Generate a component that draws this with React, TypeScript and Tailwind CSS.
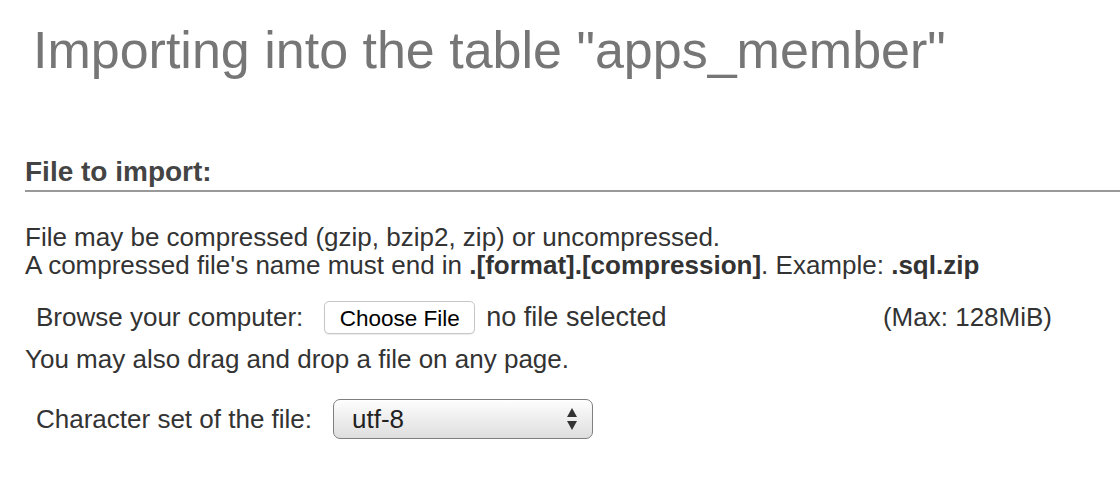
import React from 'react';

export default function App() {
  return (
    <div className="w-[1120px] h-[492px] overflow-hidden bg-white text-[#333] font-['Liberation_Sans',Arial,sans-serif]">
      <h2 className="pl-[33px] pt-[20px] text-[52px] leading-[60px] text-[#767676] whitespace-nowrap">
        Importing into the table "apps_member"
      </h2>

      <div className="ml-[25px] mt-[76px]">
        <h3 className="text-[28px] leading-[32px] font-bold text-[#444] pb-[2px] border-b-2 border-[#999]">
          File to import:
        </h3>

        <p className="mt-[31px] text-[26px] leading-[28px] whitespace-nowrap">
          File may be compressed (gzip, bzip2, zip) or uncompressed.
          <br />
          A compressed file's name must end in <b>.[format].[compression]</b>. Example: <b>.sql.zip</b>
        </p>
      </div>

      <div className="mt-[22px] ml-[36px] w-[1016px] h-[33px] flex items-center text-[26px] whitespace-nowrap">
        <span>Browse your computer:</span>
        <button className="ml-[21px] h-[33px] w-[151px] rounded-[5px] border border-[#c6c6c6] bg-white text-[22.5px] text-black shadow-[0_1px_1px_rgba(0,0,0,0.08)]">
          Choose File
        </button>
        <span className="ml-[11px] text-[27px]">no file selected</span>
        <span className="ml-auto">(Max: 128MiB)</span>
      </div>

      <p className="mt-[11px] ml-[25px] text-[26px] leading-[28px] whitespace-nowrap">
        You may also drag and drop a file on any page.
      </p>

      <div className="mt-[26px] ml-[36px] h-[40px] flex items-center text-[26px] whitespace-nowrap">
        <span>Character set of the file:</span>
        <div className="ml-[21px] w-[260px] h-[40px] rounded-[7px] border border-[#7f7f7f] bg-gradient-to-b from-[#fefefe] to-[#dedede] flex items-center pl-[18px] pr-[14px] shadow-[inset_0_1px_0_rgba(255,255,255,0.8)]">
          <span className="text-[26px] text-[#222]">utf-8</span>
          <svg className="ml-auto" width="12" height="24" viewBox="0 0 12 24">
            <path d="M6 1 L11 10 L1 10 Z" fill="#333" />
            <path d="M6 23 L11 14 L1 14 Z" fill="#333" />
          </svg>
        </div>
      </div>
    </div>
  );
}
